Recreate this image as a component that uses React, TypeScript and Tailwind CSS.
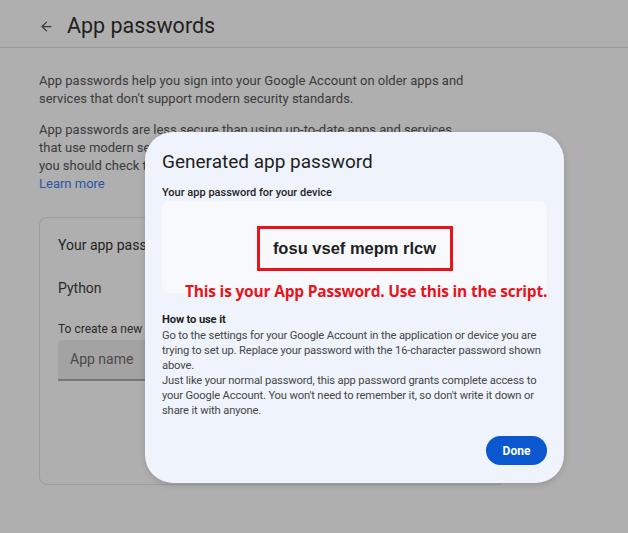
import React from "react";
import { ArrowLeft } from "lucide-react";

const GeneratedPasswordDialog = () => {
  return (
    <div className="absolute left-[145px] top-[132px] w-[419px] h-[351px] rounded-[28px] bg-[#eff3fb] px-[17px] pt-[18px] pb-[18px] flex flex-col shadow-[0_2px_6px_rgba(0,0,0,0.15)]">
      <h2 className="text-[19px] leading-[24px] text-[#1f1f1f]">Generated app password</h2>
      <p className="mt-[12px] text-[11px] leading-[14px] font-medium text-[#1f1f1f]">Your app password for your device</p>
      <div className="relative mt-[1px] h-[92px] rounded-[8px] bg-[#f8f9fd] flex justify-center pt-[25px]">
        <div className="w-[196px] h-[45px] border-[3px] border-[#e8141b] flex items-center justify-center">
          <span className="text-[16.5px] font-bold text-[#1f1f1f] font-['Liberation_Sans',sans-serif]">fosu vsef mepm rlcw</span>
        </div>
        <span className="absolute left-[23px] top-[80px] whitespace-nowrap text-[15.5px] leading-[20px] font-bold text-[#e8141b] font-['Open_Sans',sans-serif] tracking-[-0.2px]">
          This is your App Password. Use this in the script.
        </span>
      </div>
      <div className="mt-[19px] text-[11.2px] leading-[15px] tracking-[-0.15px] text-[#444746]">
        <p className="font-bold text-[#1f1f1f]">How to use it</p>
        <p className="mt-[1px]">
          Go to the settings for your Google Account in the application or device you are trying to set up. Replace your password with the 16-character password shown above.
        </p>
        <p>
          Just like your normal password, this app password grants complete access to your Google Account. You won't need to remember it, so don't write it down or share it with anyone.
        </p>
      </div>
      <div className="mt-auto flex justify-end">
        <button className="w-[61px] h-[29px] rounded-full bg-[#0b57d0] text-white text-[12px] font-bold">Done</button>
      </div>
    </div>
  );
};

export default function App() {
  return (
    <div className="relative w-[628px] h-[533px] overflow-hidden bg-[#afafaf] font-['Roboto',sans-serif] text-[#2a2a2a]">
      <header className="h-[48px] border-b border-[#999999] flex items-center pl-[39px] pt-[6px]">
        <ArrowLeft className="w-[15px] h-[15px] text-[#3a3a3a]" strokeWidth={2} />
        <h1 className="ml-[13px] text-[21.5px] text-[#1f1f1f]">App passwords</h1>
      </header>
      <main className="px-[39px] pt-[24px]">
        <p className="text-[13px] leading-[18px] text-[#3a3a3a]">
          App passwords help you sign into your Google Account on older apps and<br />
          services that don't support modern security standards.
        </p>
        <p className="mt-[13px] text-[13px] leading-[18px] text-[#3a3a3a]">
          App passwords are less secure than using up-to-date apps and services<br />
          that use modern security standards. Before you create an app password,<br />
          you should check to see if your app needs this in order to sign in.
        </p>
        <a className="block text-[13px] leading-[18px] text-[#2c55a8]">Learn more</a>
        <div className="mt-[24px] w-[466px] h-[268px] rounded-[8px] border border-[#9c9c9c] px-[18px] pt-[17px]">
          <p className="text-[14px] text-[#1f1f1f]">Your app passwords</p>
          <p className="mt-[22px] text-[14px] text-[#2a2a2a]">Python</p>
          <p className="mt-[21px] text-[12px] text-[#2a2a2a]">To create a new app specific password, type a name for it below...</p>
          <div className="mt-[2px] w-[260px] h-[41px] bg-[#a3a3a3] border-b-2 border-[#777777] rounded-t-[4px] flex items-center pl-[12px]">
            <span className="text-[14px] text-[#4a4a4a]">App name</span>
          </div>
        </div>
      </main>
      <GeneratedPasswordDialog />
    </div>
  );
}
